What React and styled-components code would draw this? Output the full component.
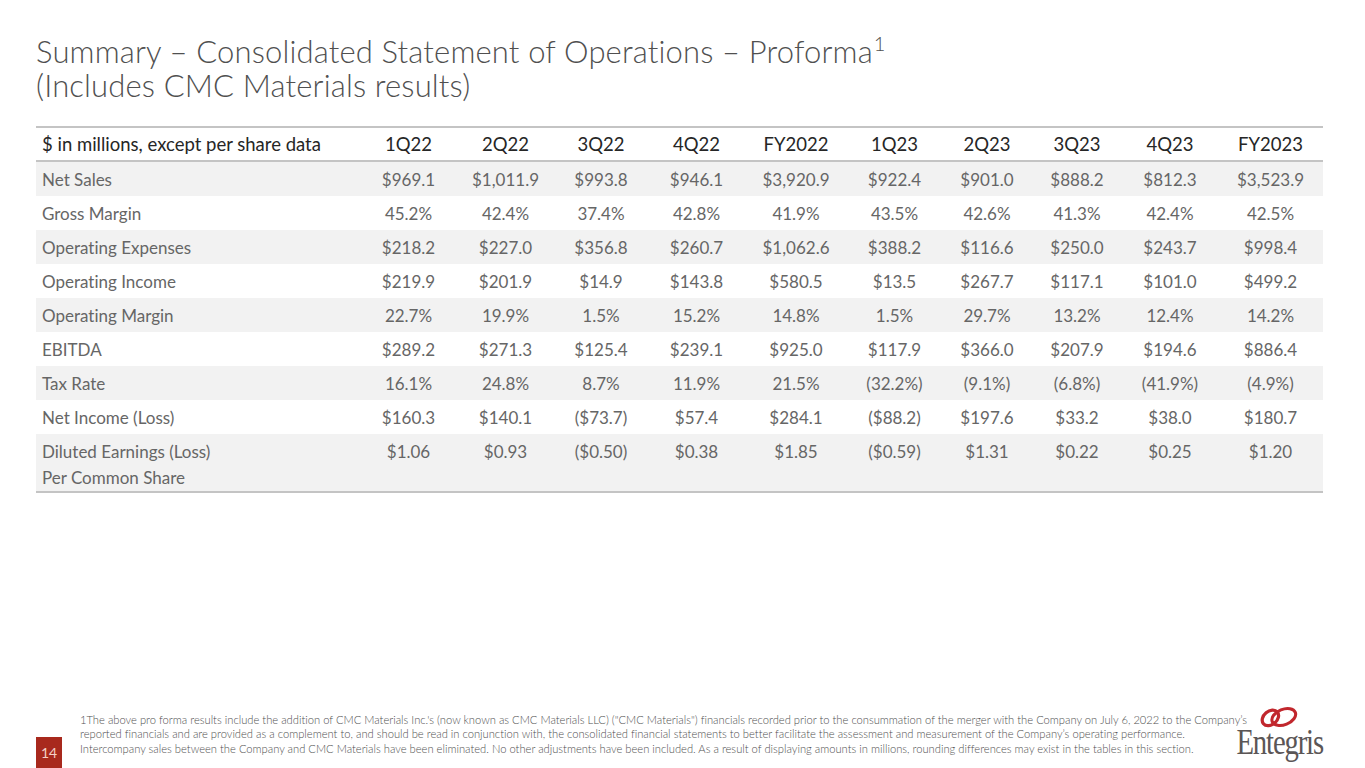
import styled, { createGlobalStyle } from "styled-components"

const Global = createGlobalStyle`
body{
    margin:0;
    background:#fff;
    font-family: Lato, "Liberation Sans", sans-serif;
    font-variant-ligatures: none;
}
`

const Page = styled.div`
width:1365px;
height:768px;
display:flex;
flex-direction:column;
overflow:hidden;
`

const Title = styled.h1`
margin:0;
padding:34px 0 0 36px;
font-family: Lato, sans-serif;
font-weight:300;
font-size:31px;
line-height:34px;
letter-spacing:0.15px;
color:#505050;
sup{
    font-size:20px;
    line-height:0;
    position:relative;
    top:-1px;
    margin-left:1px;
}
`

const Table = styled.div`
margin:24px 0 0 36px;
width:1287px;
border-top:2px solid #c4c4c4;
border-bottom:2px solid #c4c4c4;
`

const cols = "324px 97px 97px 94px 97px 102px 95px 90px 90px 96px 105px"

const Row = styled.div`
display:grid;
grid-template-columns:${cols};
background:${p => p.$shade ? "#f2f2f2" : "#fff"};
padding:${p => p.$head ? "3px 0" : p.$tall ? "5px 0 0" : "5px 0 3px"};
border-bottom:${p => p.$head ? "2px solid #c4c4c4" : "none"};
font-size:${p => p.$head ? "18.5px" : "17px"};
line-height:26px;
color:${p => p.$head ? "#262626" : "#666"};
`

const Label = styled.div`
padding-left:6px;
white-space:nowrap;
`

const Cell = styled.div`
text-align:center;
white-space:nowrap;
`

const Footer = styled.footer`
margin-top:auto;
display:flex;
align-items:flex-end;
padding-left:36px;
`

const PageNum = styled.div`
flex:0 0 26px;
height:31px;
background:#a8291d;
color:#f4d0c8;
font-size:14px;
display:flex;
align-items:center;
justify-content:center;
`

const Note = styled.div`
flex:0 0 1100px;
min-width:0;
margin-left:18px;
padding-bottom:12px;
font-family: Lato, sans-serif;
font-weight:300;
font-size:11.2px;
line-height:14.5px;
color:#505050;
div{ white-space:nowrap; }
`

const Logo = styled.div`
flex:0 0 88px;
margin-left:auto;
margin-right:33px;
padding-bottom:12px;
display:flex;
flex-direction:column;
align-items:center;
`

const LogoText = styled.div`
font-family:"Liberation Serif", serif;
font-size:35px;
line-height:27px;
color:#5b5656;
letter-spacing:-1.4px;
white-space:nowrap;
transform:scaleX(0.82);
`

const heads = ["1Q22","2Q22","3Q22","4Q22","FY2022","1Q23","2Q23","3Q23","4Q23","FY2023"]

const rows = [
    ["Net Sales", ["$969.1","$1,011.9","$993.8","$946.1","$3,920.9","$922.4","$901.0","$888.2","$812.3","$3,523.9"]],
    ["Gross Margin", ["45.2%","42.4%","37.4%","42.8%","41.9%","43.5%","42.6%","41.3%","42.4%","42.5%"]],
    ["Operating Expenses", ["$218.2","$227.0","$356.8","$260.7","$1,062.6","$388.2","$116.6","$250.0","$243.7","$998.4"]],
    ["Operating Income", ["$219.9","$201.9","$14.9","$143.8","$580.5","$13.5","$267.7","$117.1","$101.0","$499.2"]],
    ["Operating Margin", ["22.7%","19.9%","1.5%","15.2%","14.8%","1.5%","29.7%","13.2%","12.4%","14.2%"]],
    ["EBITDA", ["$289.2","$271.3","$125.4","$239.1","$925.0","$117.9","$366.0","$207.9","$194.6","$886.4"]],
    ["Tax Rate", ["16.1%","24.8%","8.7%","11.9%","21.5%","(32.2%)","(9.1%)","(6.8%)","(41.9%)","(4.9%)"]],
    ["Net Income (Loss)", ["$160.3","$140.1","($73.7)","$57.4","$284.1","($88.2)","$197.6","$33.2","$38.0","$180.7"]],
]

const eps = ["$1.06","$0.93","($0.50)","$0.38","$1.85","($0.59)","$1.31","$0.22","$0.25","$1.20"]

export default function App(){
    return(
        <Page>
            <Global/>
            <Title>
                Summary – Consolidated Statement of Operations – Proforma<sup>1</sup><br/>
                (Includes CMC Materials results)
            </Title>
            <Table>
                <Row $head>
                    <Label>$ in millions, except per share data</Label>
                    {heads.map(h => <Cell key={h}>{h}</Cell>)}
                </Row>
                {rows.map(([label, vals], i) => (
                    <Row key={label} $shade={i % 2 === 0}>
                        <Label>{label}</Label>
                        {vals.map((v, j) => <Cell key={j}>{v}</Cell>)}
                    </Row>
                ))}
                <Row $shade $tall>
                    <Label>Diluted Earnings (Loss)<br/>Per Common Share</Label>
                    {eps.map((v, j) => <Cell key={j}>{v}</Cell>)}
                </Row>
            </Table>
            <Footer>
                <PageNum>14</PageNum>
                <Note>
                    <div>1The above pro forma results include the addition of CMC Materials Inc.'s (now known as CMC Materials LLC) ("CMC Materials") financials recorded prior to the consummation of the merger with the Company on July 6, 2022 to the Company’s</div>
                    <div>reported financials and are provided as a complement to, and should be read in conjunction with, the consolidated financial statements to better facilitate the assessment and measurement of the Company’s operating performance.</div>
                    <div>Intercompany sales between the Company and CMC Materials have been eliminated. No other adjustments have been included. As a result of displaying amounts in millions, rounding differences may exist in the tables in this section.</div>
                </Note>
                <Logo>
                    <svg width="44" height="24" viewBox="0 0 46 25">
                        <ellipse cx="14" cy="13.5" rx="9.5" ry="7" transform="rotate(-40 14 13.5)" fill="none" stroke="#c1272d" strokeWidth="3.4"/>
                        <ellipse cx="28" cy="12.5" rx="13" ry="8" transform="rotate(-22 28 12.5)" fill="none" stroke="#c1272d" strokeWidth="3.2"/>
                    </svg>
                    <LogoText>Entegris</LogoText>
                </Logo>
            </Footer>
        </Page>
    )
}
